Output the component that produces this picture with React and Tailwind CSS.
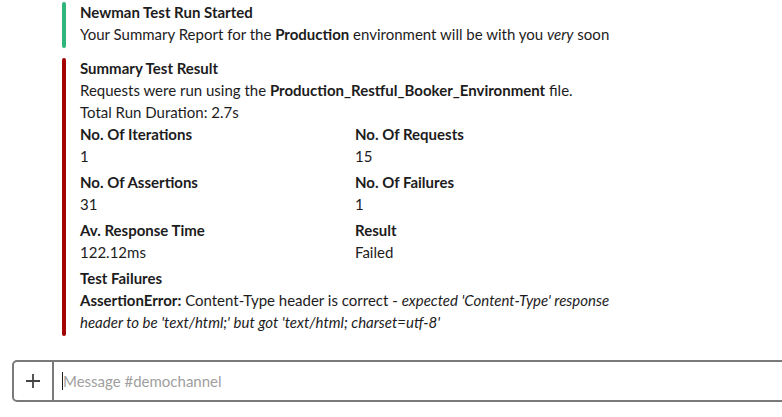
export default function App() {
  const font = { fontFamily: 'Lato, "Noto Sans", sans-serif' };
  return (
    <div className="w-[782px] h-[417px] bg-white text-[#1d1c1d] overflow-hidden" style={font}>
      <div className="pl-[62px] pt-[2px]">
        <div className="flex">
          <div className="w-[4px] rounded-[2px] bg-[#2eb67d]" />
          <div className="pl-[14px] text-[15px] leading-[22px] -mt-[1px]">
            <div className="font-bold">Newman Test Run Started</div>
            <div>
              Your Summary Report for the <span className="font-bold">Production</span> environment will be with you <em>very</em> soon
            </div>
            <div className="h-[3px]" />
          </div>
        </div>
        <div className="flex mt-[10px]">
          <div className="w-[4px] rounded-[2px] bg-[#a30200]" />
          <div className="pl-[14px] text-[15px] leading-[22px] -mt-[1px]">
            <div className="font-bold">Summary Test Result</div>
            <div>
              Requests were run using the <span className="font-bold">Production_Restful_Booker_Environment</span> file.
            </div>
            <div>Total Run Duration: 2.7s</div>
            <div className="grid grid-cols-[275px_275px] gap-y-[4px]">
              <div>
                <div className="font-bold">No. Of Iterations</div>
                <div>1</div>
              </div>
              <div>
                <div className="font-bold">No. Of Requests</div>
                <div>15</div>
              </div>
              <div>
                <div className="font-bold">No. Of Assertions</div>
                <div>31</div>
              </div>
              <div>
                <div className="font-bold">No. Of Failures</div>
                <div>1</div>
              </div>
              <div>
                <div className="font-bold">Av. Response Time</div>
                <div>122.12ms</div>
              </div>
              <div>
                <div className="font-bold">Result</div>
                <div>Failed</div>
              </div>
            </div>
            <div className="mt-[4px] font-bold">Test Failures</div>
            <div>
              <span className="font-bold">AssertionError:</span> Content-Type header is correct - <em>expected 'Content-Type' response</em>
              <br />
              <em>header to be 'text/html;' but got 'text/html; charset=utf-8'</em>
            </div>
            <div className="h-[3px]" />
          </div>
        </div>
      </div>
      <div className="ml-[12px] mt-[24px] w-[800px] h-[42px] flex border-2 border-[#7a7a7a] rounded-[5px]">
        <div className="w-[40px] flex items-center justify-center border-r-2 border-[#7a7a7a]">
          <svg width="16" height="16" viewBox="0 0 16 16">
            <path d="M8 1v14M1 8h14" stroke="#444" strokeWidth="1.8" />
          </svg>
        </div>
        <div className="flex items-center pl-[8px]">
          <div className="w-[1px] h-[18px] bg-[#1d1c1d]" />
          <span className="text-[15px] text-[#a0a0a0]">Message #demochannel</span>
        </div>
      </div>
    </div>
  );
}
